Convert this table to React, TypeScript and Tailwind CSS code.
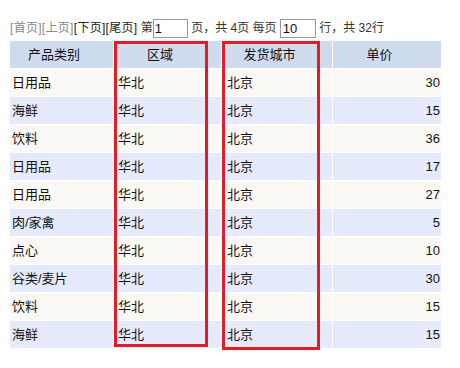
import React from "react";

const rows = [
  { cat: "日用品", region: "华北", city: "北京", price: 30 },
  { cat: "海鲜", region: "华北", city: "北京", price: 15 },
  { cat: "饮料", region: "华北", city: "北京", price: 36 },
  { cat: "日用品", region: "华北", city: "北京", price: 17 },
  { cat: "日用品", region: "华北", city: "北京", price: 27 },
  { cat: "肉/家禽", region: "华北", city: "北京", price: 5 },
  { cat: "点心", region: "华北", city: "北京", price: 10 },
  { cat: "谷类/麦片", region: "华北", city: "北京", price: 30 },
  { cat: "饮料", region: "华北", city: "北京", price: 15 },
  { cat: "海鲜", region: "华北", city: "北京", price: 15 },
];

const headers = ["产品类别", "区域", "发货城市", "单价"];

const App = () => {
  return (
    <div
      className="w-[460px] h-[368px] bg-white text-[13px] text-[#111] pl-[10px] pt-[19px]"
      style={{ fontFamily: '"Liberation Sans", "Noto Sans CJK SC", sans-serif' }}
    >
      {/* pager */}
      <div className="flex items-center h-[19px] leading-[19px] whitespace-pre text-[12px] text-[#333]">
        <span className="text-[#888] tracking-[0.3px]">[首页][上页]</span>
        <span className="text-[#222] tracking-[0.3px]">[下页][尾页]</span>
        <span> 第</span>
        <div className="w-[35px] h-[19px] border border-[#999] bg-white text-[13px] text-[#111] leading-[17px] pl-px">1</div>
        <span> 页，共 4页 每页 </span>
        <div className="w-[36px] h-[19px] border border-[#999] bg-white text-[13px] text-[#111] leading-[17px] pl-[2px]">10</div>
        <span> 行，共 32行</span>
      </div>

      {/* table */}
      <div className="relative mt-[3px] w-[431px]">
        <div className="grid grid-cols-[103px_107px_110px_108px] gap-px bg-white">
          {headers.map((h) => (
            <div
              key={h}
              className="h-[27px] bg-[#cfdcef] flex items-center justify-center pr-[15px]"
            >
              {h}
            </div>
          ))}
          {rows.map((r, i) => {
            const bg = i % 2 === 0 ? "bg-[#fbf9f5]" : "bg-[#e5eafd]";
            return (
              <React.Fragment key={i}>
                <div className={`h-[27px] flex items-center pl-[2px] ${bg}`}>{r.cat}</div>
                <div className={`h-[27px] flex items-center pl-[4px] ${bg}`}>{r.region}</div>
                <div className={`h-[27px] flex items-center pl-[5px] ${bg}`}>{r.city}</div>
                <div className={`h-[27px] flex items-center justify-end pr-px ${bg}`}>{r.price}</div>
              </React.Fragment>
            );
          })}
        </div>

        {/* red annotation boxes */}
        <div className="absolute left-[104px] top-0 w-[94px] h-[306px] border-[3px] border-[#e81b25]" />
        <div className="absolute left-[212px] top-0 w-[98px] h-[309px] border-[3px] border-[#e81b25]" />
      </div>
    </div>
  );
};

export default App;
